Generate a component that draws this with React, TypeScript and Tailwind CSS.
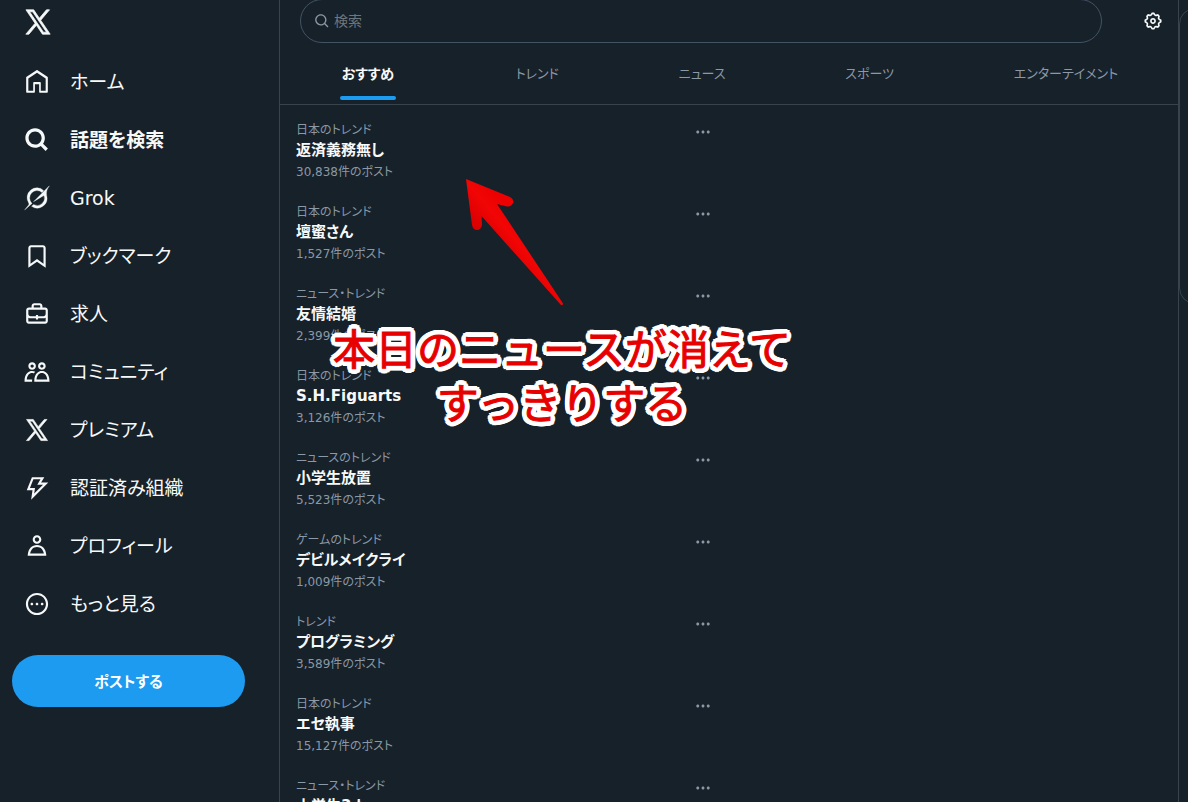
import React from "react";

const X_MARK =
  "M21.742 21.75l-7.563-11.179 7.056-8.321h-2.456l-5.691 6.714-4.54-6.714H2.359l7.29 10.776L2.25 21.75h2.456l6.035-7.118 4.818 7.118h6.183zM7.739 3.818L18.81 20.182h-2.447L5.29 3.818h2.449z";

const ICONS = {
  home: "M21.591 7.146L12.52 1.157c-.316-.21-.724-.21-1.04 0l-9.071 5.99c-.26.173-.409.456-.409.757v13.183c0 .502.418.913.929.913H9.14c.51 0 .929-.41.929-.913v-7.075h3.909v7.075c0 .502.417.913.928.913h6.165c.511 0 .929-.41.929-.913V7.904c0-.301-.158-.584-.408-.758zM20 20l-4.5.01.011-7.097c0-.502-.418-.913-.928-.913H9.44c-.511 0-.929.41-.929.913L8.5 20H4V8.773l8.011-5.342L20 8.764z",
  searchBold:
    "M10.25 4.25c-3.314 0-6 2.686-6 6s2.686 6 6 6c1.657 0 3.155-.67 4.243-1.757 1.087-1.088 1.757-2.586 1.757-4.243 0-3.314-2.686-6-6-6zm-9 6c0-4.971 4.029-9 9-9s9 4.029 9 9c0 1.943-.617 3.744-1.664 5.215l4.475 4.474-2.122 2.122-4.474-4.475c-1.471 1.047-3.272 1.664-5.215 1.664-4.971 0-9-4.029-9-9z",
  search:
    "M10.25 3.75c-3.59 0-6.5 2.91-6.5 6.5s2.91 6.5 6.5 6.5c1.795 0 3.419-.726 4.596-1.904 1.178-1.177 1.904-2.801 1.904-4.596 0-3.59-2.91-6.5-6.5-6.5zm-8.5 6.5c0-4.694 3.806-8.5 8.5-8.5s8.5 3.806 8.5 8.5c0 1.986-.682 3.815-1.824 5.262l4.781 4.781-1.414 1.414-4.781-4.781c-1.447 1.142-3.276 1.824-5.262 1.824-4.694 0-8.5-3.806-8.5-8.5z",
  grok: "M0.600 23L4.300 18.400Q4.900 17.600 4.200 16.300A9 9 0 0 1 18.200 5.200L16.600 6.900A6.800 6.800 0 0 0 7.400 17ZM23.400 0.800L8.800 15.400L18.400 9.600A6.800 6.800 0 0 1 8.800 18.100L7 19.600A9 9 0 0 0 20.900 9.900C20.300 6.300 21.200 4 23.400 0.800Z",
  bookmark:
    "M4 4.5C4 3.12 5.119 2 6.5 2h11C18.881 2 20 3.12 20 4.5v18.44l-8-5.71-8 5.71V4.5zM6.5 4c-.276 0-.5.22-.5.5v14.56l6-4.29 6 4.29V4.5c0-.28-.224-.5-.5-.5h-11z",
  jobs: "M19.5 6H17V4.5C17 3.12 15.88 2 14.5 2h-5C8.12 2 7 3.12 7 4.5V6H4.5C3.12 6 2 7.12 2 8.5v10C2 19.88 3.12 21 4.5 21h15c1.38 0 2.5-1.12 2.5-2.5v-10C22 7.12 20.88 6 19.5 6zM9 4.5c0-.28.23-.5.5-.5h5c.28 0 .5.22.5.5V6H9V4.5zm11 14c0 .28-.22.5-.5.5h-15c-.27 0-.5-.22-.5-.5v-3.04c.59.35 1.27.54 2 .54h5v1h2v-1h5c.73 0 1.41-.19 2-.54v3.04zm0-6.49c0 1.1-.9 1.99-2 1.99h-5v-1h-2v1H6c-1.1 0-2-.9-2-2V8.5c0-.28.23-.5.5-.5h15c.28 0 .5.22.5.5v3.51z",
  communities:
    "M7.501 19.917L7.471 21H.472l.029-1.027c.184-6.618 3.736-8.977 7-8.977.963 0 1.95.212 2.87.672-.444.478-.851 1.03-1.212 1.656-.507-.204-1.054-.329-1.658-.329-2.767 0-4.57 2.223-4.938 6.004H7.56c-.023.302-.05.599-.059.918zm15.998.056L23.528 21H9.472l.029-1.027c.184-6.618 3.736-8.977 7-8.977s6.816 2.358 7 8.977zM21.437 19c-.367-3.781-2.17-6.004-4.938-6.004s-4.57 2.223-4.938 6.004h9.875zm-4.938-9c-.799 0-1.527-.279-2.116-.73-.836-.64-1.384-1.638-1.384-2.77 0-1.93 1.567-3.5 3.5-3.5s3.5 1.57 3.5 3.5c0 1.132-.548 2.13-1.384 2.77-.589.451-1.317.73-2.116.73zm-1.5-3.5c0 .827.673 1.5 1.5 1.5s1.5-.673 1.5-1.5-.673-1.5-1.5-1.5-1.5.673-1.5 1.5zM7.5 3C9.433 3 11 4.57 11 6.5S9.433 10 7.5 10 4 8.43 4 6.5 5.567 3 7.5 3zm0 2C6.673 5 6 5.673 6 6.5S6.673 8 7.5 8 9 7.327 9 6.5 8.327 5 7.5 5z",
  premium: X_MARK,
  organizations:
    "M7.323 2h11.443l-3 5h6.648L6.586 22.83 7.847 14H2.523l4.8-12zm1.354 2l-3.2 8h4.676l-.739 5.17L17.586 9h-5.352l3-5H8.677z",
  profile:
    "M5.651 19h12.698c-.337-1.8-1.023-3.21-1.945-4.19C15.318 13.65 13.838 13 12 13s-3.317.65-4.404 1.81c-.922.98-1.608 2.39-1.945 4.19zm.486-5.56C7.627 11.85 9.648 11 12 11s4.373.85 5.863 2.44c1.477 1.58 2.366 3.8 2.632 6.46l.11 1.1H3.395l.11-1.1c.266-2.66 1.155-4.88 2.632-6.46zM12 4c-1.105 0-2 .9-2 2s.895 2 2 2 2-.9 2-2-.895-2-2-2zM8 6c0-2.21 1.791-4 4-4s4 1.79 4 4-1.791 4-4 4-4-1.79-4-4z",
  more: "M3.75 12c0-4.56 3.69-8.25 8.25-8.25s8.25 3.69 8.25 8.25-3.69 8.25-8.25 8.25S3.75 16.56 3.75 12zM12 1.75C6.34 1.75 1.75 6.34 1.75 12S6.34 22.25 12 22.25 22.25 17.66 22.25 12 17.66 1.75 12 1.75zm-4.75 11.5c.69 0 1.25-.56 1.25-1.25s-.56-1.25-1.25-1.25S6 11.31 6 12s.56 1.25 1.25 1.25zm9.5 0c.69 0 1.25-.56 1.25-1.25s-.56-1.25-1.25-1.25-1.25.56-1.25 1.25.56 1.25 1.25 1.25zM13.25 12c0 .69-.56 1.25-1.25 1.25s-1.25-.56-1.25-1.25.56-1.25 1.25-1.25 1.25.56 1.25 1.25z",
  dots: "M3 12c0-1.1.9-2 2-2s2 .9 2 2-.9 2-2 2-2-.9-2-2zm9 2c1.1 0 2-.9 2-2s-.9-2-2-2-2 .9-2 2 .9 2 2 2zm7 0c1.1 0 2-.9 2-2s-.9-2-2-2-2 .9-2 2 .9 2 2 2z",
  gear: "M10.54 1.75h2.92l1.57 2.36c.11.17.32.25.53.21l2.53-.59 2.17 2.17-.58 2.54c-.05.2.04.41.21.53l2.36 1.57v2.92l-2.36 1.57c-.17.12-.26.33-.21.53l.58 2.54-2.17 2.17-2.53-.59c-.21-.04-.42.04-.53.21l-1.57 2.36h-2.92l-1.58-2.36c-.11-.17-.32-.25-.52-.21l-2.54.59-2.17-2.17.58-2.54c.05-.2-.03-.41-.21-.53l-2.35-1.57v-2.92L4.1 8.97c.18-.12.26-.33.21-.53L3.73 5.9 5.9 3.73l2.54.59c.2.04.41-.04.52-.21l1.58-2.36zm1.07 2l-.98 1.47C10.05 6.08 9 6.5 7.99 6.27l-1.46-.34-.6.6.33 1.46c.24 1.01-.18 2.07-1.05 2.64l-1.46.98v.78l1.46.98c.87.57 1.29 1.63 1.05 2.64l-.33 1.46.6.6 1.46-.34c1.01-.23 2.06.19 2.64 1.05l.98 1.47h.78l.97-1.47c.58-.86 1.63-1.28 2.65-1.05l1.45.34.61-.6-.34-1.46c-.23-1.01.18-2.07 1.05-2.64l1.47-.98v-.78l-1.47-.98c-.87-.57-1.28-1.63-1.05-2.64l.34-1.46-.61-.6-1.45.34c-1.02.23-2.07-.19-2.65-1.05l-.97-1.47h-.78zM12 10.5c-.83 0-1.5.67-1.5 1.5s.67 1.5 1.5 1.5c.82 0 1.5-.67 1.5-1.5s-.68-1.5-1.5-1.5zM8.5 12c0-1.93 1.56-3.5 3.5-3.5 1.93 0 3.5 1.57 3.5 3.5s-1.57 3.5-3.5 3.5c-1.94 0-3.5-1.57-3.5-3.5z",
};

type IconName = keyof typeof ICONS;

const STROKES: Partial<Record<IconName, number>> = { premium: 0.6, grok: 0.3 };

function Icon({ name, className }: { name: IconName; className: string }) {
  return (
    <svg
      viewBox="0 0 24 24"
      fill="currentColor"
      stroke="currentColor"
      strokeWidth={STROKES[name] ?? 0}
      aria-hidden="true"
      className={className}
    >
      <path d={ICONS[name]} />
    </svg>
  );
}

const NAV: { icon: IconName; label: string; active?: boolean }[] = [
  { icon: "home", label: "ホーム" },
  { icon: "searchBold", label: "話題を検索", active: true },
  { icon: "grok", label: "Grok" },
  { icon: "bookmark", label: "ブックマーク" },
  { icon: "jobs", label: "求人" },
  { icon: "communities", label: "コミュニティ" },
  { icon: "premium", label: "プレミアム" },
  { icon: "organizations", label: "認証済み組織" },
  { icon: "profile", label: "プロフィール" },
  { icon: "more", label: "もっと見る" },
];

const TABS = ["おすすめ", "トレンド", "ニュース", "スポーツ", "エンターテイメント"];

const TRENDS = [
  { category: "日本のトレンド", title: "返済義務無し", count: "30,838件のポスト" },
  { category: "日本のトレンド", title: "壇蜜さん", count: "1,527件のポスト" },
  { category: "ニュース・トレンド", title: "友情結婚", count: "2,399件のポスト" },
  { category: "日本のトレンド", title: "S.H.Figuarts", count: "3,126件のポスト" },
  { category: "ニュースのトレンド", title: "小学生放置", count: "5,523件のポスト" },
  { category: "ゲームのトレンド", title: "デビルメイクライ", count: "1,009件のポスト" },
  { category: "トレンド", title: "プログラミング", count: "3,589件のポスト" },
  { category: "日本のトレンド", title: "エセ執事", count: "15,127件のポスト" },
  { category: "ニュース・トレンド", title: "小学生3人", count: "" },
];

function Sidebar() {
  return (
    <header className="flex w-[280px] shrink-0 flex-col border-r border-[#38444d] px-3">
      <a href="#home" aria-label="X" className="flex h-[53px] items-start pt-[7px] pl-[11px]">
        <Icon name="premium" className="size-[30px]" />
      </a>
      <nav>
        <ul>
          {NAV.map((item) => (
            <li key={item.label}>
              <a href="#nav" className="flex h-[58px] items-center gap-5 pl-3 text-[19px]">
                <Icon name={item.icon} className="size-[26px] shrink-0" />
                <span className={item.active ? "font-bold" : ""}>{item.label}</span>
              </a>
            </li>
          ))}
        </ul>
      </nav>
      <button
        type="button"
        className="mt-[22px] mr-[22px] h-[52px] rounded-full bg-[#1d9bf0] pt-0.5 text-[15px] font-bold text-white"
      >
        ポストする
      </button>
    </header>
  );
}

function SearchBar() {
  return (
    <div className="flex items-center pr-[15px] pl-5">
      <label className="-mt-px flex h-11 flex-1 items-center rounded-full border border-[#425364] px-[13px] text-[#8b98a5]">
        <Icon name="search" className="size-4 shrink-0" />
        <input
          type="text"
          aria-label="検索"
          placeholder="検索"
          className="ml-1 min-w-0 flex-1 bg-transparent text-sm outline-none placeholder:text-[#6e767d]"
        />
      </label>
      <button type="button" aria-label="設定" className="ml-[41px] pb-0.5">
        <Icon name="gear" className="size-5" />
      </button>
    </div>
  );
}

function Tabs() {
  return (
    <div role="tablist" className="flex h-[62px] border-b border-[#38444d]">
      {TABS.map((tab, i) => (
        <button
          key={tab}
          type="button"
          role="tab"
          aria-selected={i === 0}
          className="flex flex-auto justify-center"
        >
          {i === 0 ? (
            <span className="flex h-[57px] min-w-14 flex-col items-center justify-between text-sm leading-[22px] font-bold">
              <span className="pt-5">{tab}</span>
              <span className="h-1 w-14 rounded-full bg-[#1d9bf0]" />
            </span>
          ) : (
            <span className="pt-5 text-[13px] leading-[22px] text-[#8b98a5]">{tab}</span>
          )}
        </button>
      ))}
    </div>
  );
}

function TrendList() {
  return (
    <ul className="max-w-[448px]">
      {TRENDS.map((trend, i) => (
        <li key={i} className="flex items-start justify-between px-4 pt-[15px] pb-[5px]">
          <div>
            <p className="text-xs leading-5 text-[#8b98a5]">{trend.category}</p>
            <p className="text-[15px] leading-5 font-bold">{trend.title}</p>
            <p className="mt-0.5 text-xs leading-5 text-[#8b98a5]">{trend.count}</p>
          </div>
          <button type="button" aria-label="もっと見る" className="pt-[3px] text-[#8b98a5]">
            <Icon name="dots" className="size-[18px]" />
          </button>
        </li>
      ))}
    </ul>
  );
}

/* Rings of solid shadows give the caption a white outline with round corners. */
const OUTLINE = [3, 5]
  .flatMap((radius) =>
    Array.from({ length: 24 }, (_, i) => {
      const angle = (i * Math.PI) / 12;
      return `${(Math.cos(angle) * radius).toFixed(2)}px ${(Math.sin(angle) * radius).toFixed(2)}px 0 #fff`;
    }),
  )
  .join(", ");

function Annotation() {
  return (
    <>
      <svg
        viewBox="0 0 110 136"
        aria-hidden="true"
        className="pointer-events-none absolute top-[174px] left-[460px] h-[136px] w-[110px]"
      >
        <defs>
          <linearGradient id="arrow" x1="20" y1="60" x2="50" y2="35" gradientUnits="userSpaceOnUse">
            <stop offset="0" stopColor="#d80000" />
            <stop offset="0.6" stopColor="#f20505" />
            <stop offset="1" stopColor="#ec0000" />
          </linearGradient>
        </defs>
        <path
          d="M6 5L50 23Q54 25 53 29Q51 33 47 32.500L37 30L103 129.500Q103.500 131.500 101 131L21.500 42L22 51Q21 56 17 56Q13 56 12 51Z"
          fill="url(#arrow)"
        />
      </svg>
      <p
        className="pointer-events-none absolute top-[324px] left-[322px] w-[480px] text-center text-[42px] leading-[54px] text-[#e60000] [-webkit-text-stroke:1px_#e60000] [font-feature-settings:normal]"
        style={{ textShadow: OUTLINE }}
      >
        本日のニュースが消えて
        <br />
        すっきりする
      </p>
    </>
  );
}

export default function App() {
  return (
    <div className="relative flex h-screen overflow-hidden bg-[#17212a] font-['DejaVu_Sans','Noto_Sans_CJK_JP',sans-serif] text-[#f7f9f9] [font-feature-settings:'palt']">
      <Sidebar />
      <main className="min-w-0 flex-1 border-r border-[#38444d]">
        <SearchBar />
        <Tabs />
        <TrendList />
      </main>
      <aside className="w-[9px] shrink-0 overflow-hidden pt-2">
        <div className="h-[296px] w-[350px] rounded-2xl border border-[#38444d]" />
      </aside>
      <Annotation />
    </div>
  );
}
